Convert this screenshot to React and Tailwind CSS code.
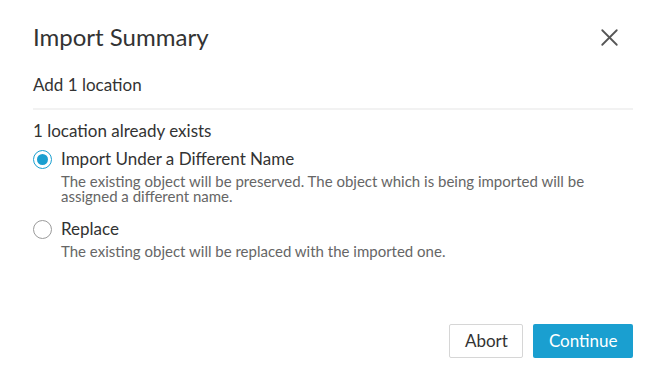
import { X } from 'lucide-react';

const Radio = ({ checked }) => (
  <span
    className={`flex items-center justify-center w-[19px] h-[19px] rounded-full border-[1.5px] bg-white ${
      checked ? 'border-[#1a9fd0]' : 'border-[#9a9a9a]'
    }`}
  >
    {checked && <span className="w-[11px] h-[11px] rounded-full bg-[#1a9fd0]" />}
  </span>
);

const Option = ({ checked, label, children }) => (
  <div className="flex gap-[9px]">
    <div className="pt-[2px]">
      <Radio checked={checked} />
    </div>
    <div className="flex flex-col">
      <span className="text-[17px] leading-[22px] text-[#333]">{label}</span>
      <p className="mt-[4px] text-[15px] leading-[15px] text-[#666] max-w-[560px]">{children}</p>
    </div>
  </div>
);

export default function App() {
  return (
    <div
      className="w-[669px] h-[385px] bg-white flex flex-col pl-[33px] pr-[36px]"
      style={{ fontFamily: '"Source Sans Pro", Lato, sans-serif' }}
    >
      <div className="flex items-center justify-between pt-[22px]">
        <h1 className="text-[24px] leading-[30px] text-[#333]">Import Summary</h1>
        <button className="text-[#555] mr-[9px]">
          <X className="w-[29px] h-[29px]" strokeWidth={1.5} />
        </button>
      </div>

      <div className="mt-[22px] pb-[12px] border-b-2 border-[#f2f2f2] text-[17px] leading-[22px] text-[#333]">
        Add 1 location
      </div>

      <div className="mt-[10px] text-[17px] leading-[22px] text-[#333]">1 location already exists</div>

      <div className="flex flex-col gap-[14px] mt-[6px]">
        <Option checked label="Import Under a Different Name">
          The existing object will be preserved. The object which is being imported will be assigned a different name.
        </Option>
        <Option label="Replace">The existing object will be replaced with the imported one.</Option>
      </div>

      <div className="mt-auto mb-[27px] flex justify-end gap-[10px]">
        <button className="h-[34px] px-[14.5px] border border-[#d6d6d6] rounded-[2px] text-[17px] text-[#333] bg-white">
          Abort
        </button>
        <button className="h-[34px] px-[15.5px] rounded-[2px] text-[17px] text-white bg-[#1a9fd0]">
          Continue
        </button>
      </div>
    </div>
  );
}
